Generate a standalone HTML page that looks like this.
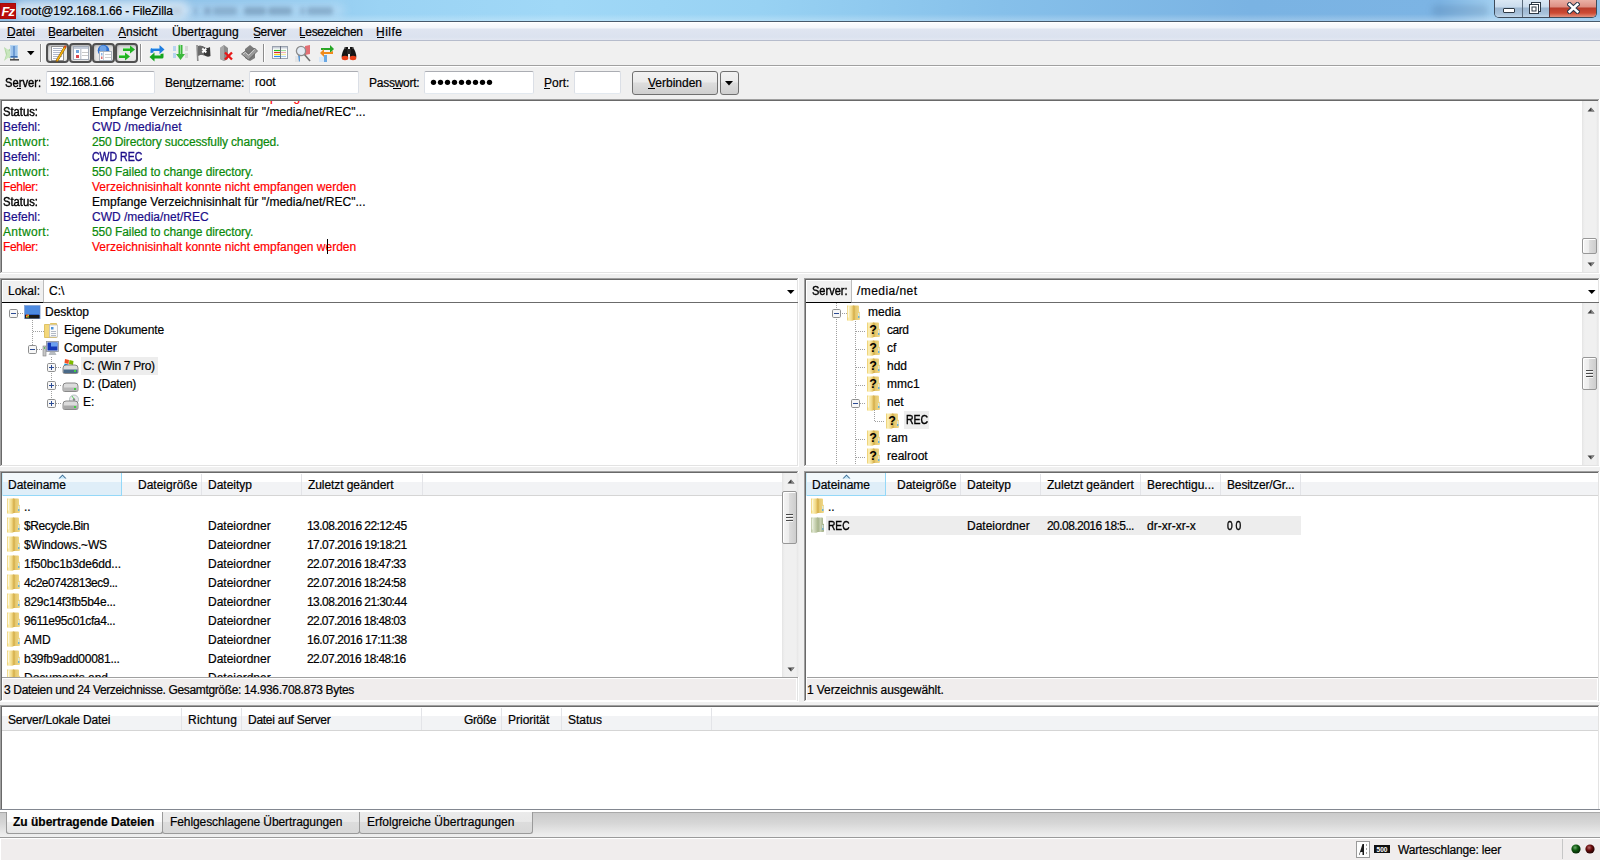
<!DOCTYPE html>
<html><head><meta charset="utf-8">
<style>
*{box-sizing:border-box;margin:0;padding:0}
html,body{width:1600px;height:860px;overflow:hidden;background:#f0f0f0;font:12px "Liberation Sans",sans-serif;color:#000}
.a{position:absolute;display:block}
.t{position:absolute;white-space:pre;line-height:15px;font-size:12px;transform-origin:0 0;-webkit-text-stroke:0.2px}
.clip{position:absolute;overflow:hidden}
</style></head><body>
<svg width="0" height="0" style="position:absolute">
<defs>
<linearGradient id="gF1" x1="0" x2="1" y1="0" y2="0"><stop offset="0" stop-color="#e9c965"/><stop offset=".25" stop-color="#fdf2bb"/><stop offset=".7" stop-color="#efd683"/><stop offset="1" stop-color="#d5ac45"/></linearGradient>
<linearGradient id="gF2" x1="0" x2="1" y1="0" y2="0"><stop offset="0" stop-color="#c49a30"/><stop offset=".35" stop-color="#e6c86e"/><stop offset="1" stop-color="#f0da8e"/></linearGradient>
<linearGradient id="gG1" x1="0" x2="1" y1="0" y2="0"><stop offset="0" stop-color="#b3c09a"/><stop offset=".3" stop-color="#dfe6cf"/><stop offset="1" stop-color="#a9b68c"/></linearGradient>
<linearGradient id="gG2" x1="0" x2="1" y1="0" y2="0"><stop offset="0" stop-color="#98a67e"/><stop offset=".5" stop-color="#c6d0b0"/><stop offset="1" stop-color="#9aa880"/></linearGradient>
<symbol id="fold" viewBox="0 0 16 16">
 <path d="M8 0.5 h5 q1 0 1 1 v5 l1 .8 v6.7 q0 1 -1 1 h-6 z" fill="url(#gF2)"/>
 <path d="M2 0.5 h6 q1 0 1 1 v12.5 q0 1.8 -1.8 1.8 h-4.2 q-1 0 -1 -1 z" fill="url(#gF1)"/>
 <path d="M3.3 1.5 v11" stroke="#fffdf0" stroke-width=".9"/>
 <rect x="13.3" y="8" width="1" height="5" fill="#d8eef8"/><rect x="13.3" y="11" width="1" height="2" fill="#3a9ad8"/>
</symbol>
<symbol id="foldg" viewBox="0 0 16 16">
 <path d="M8 0.5 h5 q1 0 1 1 v5 l1 .8 v6.7 q0 1 -1 1 h-6 z" fill="url(#gG2)"/>
 <path d="M2 0.5 h6 q1 0 1 1 v12.5 q0 1.8 -1.8 1.8 h-4.2 q-1 0 -1 -1 z" fill="url(#gG1)"/>
 <path d="M3.3 1.5 v11" stroke="#f2f6ea" stroke-width=".9"/>
 <rect x="13.3" y="8" width="1" height="5" fill="#d8eef8"/><rect x="13.3" y="11" width="1" height="2" fill="#4a9ac8"/>
</symbol>
<symbol id="qfold" viewBox="0 0 16 16">
 <path d="M8 0.5 h5 q1 0 1 1 v5 l1 .8 v6.7 q0 1 -1 1 h-6 z" fill="url(#gF2)"/>
 <path d="M2 0.5 h6 q1 0 1 1 v12.5 q0 1.8 -1.8 1.8 h-4.2 q-1 0 -1 -1 z" fill="url(#gF1)"/>
 <rect x="13.3" y="8" width="1" height="5" fill="#d8eef8"/><rect x="13.3" y="11" width="1" height="2" fill="#3a9ad8"/>
 <text x="8" y="12.3" font-family="Liberation Sans" font-weight="bold" font-size="12.5" text-anchor="middle" fill="#000">?</text>
</symbol>
<symbol id="plus" viewBox="0 0 9 9">
 <rect x=".5" y=".5" width="8" height="8" rx="1.2" fill="#f7f7f7" stroke="#8e8f8f"/>
 <path d="M2 4.5 h5 M4.5 2 v5" stroke="#2c4c94" stroke-width="1"/>
</symbol>
<symbol id="minus" viewBox="0 0 9 9">
 <rect x=".5" y=".5" width="8" height="8" rx="1.2" fill="#f7f7f7" stroke="#8e8f8f"/>
 <path d="M2 4.5 h5" stroke="#2c4c94" stroke-width="1"/>
</symbol>
</defs></svg>
<div class="a" style="left:0px;top:0px;width:1600px;height:21px;background:linear-gradient(90deg,#74a9da 0px,#88bde6 160px,#9bd3f4 380px,#a0d8f7 560px,#98d2f3 760px,#86c0ea 1000px,#7ab3e3 1250px,#7cb4e4 1440px,#9fcdef 1490px,#8fc2ea 1600px)"></div><div class="a" style="left:0px;top:14px;width:1600px;height:7px;background:linear-gradient(rgba(255,255,255,0),rgba(255,255,255,.25))"></div><div class="a" style="left:14px;top:1px;width:174px;height:19px;background:rgba(228,238,248,.85);filter:blur(4px);border-radius:8px"></div><div class="a" style="left:180px;top:3px;width:165px;height:15px;background:rgba(215,232,248,.35);filter:blur(4px);border-radius:8px"></div><div class="a" style="left:170px;top:7px;width:12px;height:8px;background:rgba(50,75,110,0.14);filter:blur(2px);border-radius:3px"></div><div class="a" style="left:194px;top:7px;width:3px;height:8px;background:rgba(50,75,110,0.22);filter:blur(2px);border-radius:3px"></div><div class="a" style="left:204px;top:7px;width:7px;height:8px;background:rgba(50,75,110,0.26);filter:blur(2px);border-radius:3px"></div><div class="a" style="left:213px;top:7px;width:24px;height:8px;background:rgba(50,75,110,0.24);filter:blur(2px);border-radius:3px"></div><div class="a" style="left:244px;top:7px;width:22px;height:8px;background:rgba(50,75,110,0.3);filter:blur(2px);border-radius:3px"></div><div class="a" style="left:268px;top:7px;width:24px;height:8px;background:rgba(50,75,110,0.3);filter:blur(2px);border-radius:3px"></div><div class="a" style="left:300px;top:7px;width:5px;height:8px;background:rgba(50,75,110,0.22);filter:blur(2px);border-radius:3px"></div><div class="a" style="left:307px;top:7px;width:26px;height:8px;background:rgba(50,75,110,0.28);filter:blur(2px);border-radius:3px"></div><div class="a" style="left:1432px;top:5px;width:56px;height:11px;background:rgba(50,75,110,.16);filter:blur(3px);border-radius:4px"></div><div class="a" style="left:0px;top:21px;width:1600px;height:1px;background:#47596b"></div><svg class="a" style="left:0px;top:3px;" width="16" height="16" viewBox="0 0 16 16"><rect x="0" y="0" width="16" height="16" fill="#b80d0d"/><rect x=".5" y=".5" width="15" height="15" fill="none" stroke="#9a0606" stroke-dasharray="1 1"/><text x="7.8" y="13" font-family="Liberation Sans" font-style="italic" font-weight="bold" font-size="13" text-anchor="middle" fill="#fff" letter-spacing="-1">Fz</text></svg><div class="t" style="left:21px;top:4px;color:#000;letter-spacing:-0.107px;">root@192.168.1.66 - FileZilla</div><div class="a" style="left:1494px;top:0;width:103px;height:18px;border:1px solid #3d4b5a;border-top:0;border-radius:0 0 5px 5px;overflow:hidden">
<div class="a" style="left:0;top:0;width:27px;height:17px;background:linear-gradient(#dbe8f4 0,#c9dbec 7px,#9cb6d0 8px,#a9c3db 14px,#c4d8ea 17px)"></div>
<div class="a" style="left:27px;top:0;width:1px;height:17px;background:#5a6b7c"></div>
<div class="a" style="left:28px;top:0;width:26px;height:17px;background:linear-gradient(#dbe8f4 0,#c9dbec 7px,#9cb6d0 8px,#a9c3db 14px,#c4d8ea 17px)"></div>
<div class="a" style="left:54px;top:0;width:1px;height:17px;background:#6a3030"></div>
<div class="a" style="left:55px;top:0;width:48px;height:17px;background:linear-gradient(#eab0a6 0,#dd8e82 7px,#b83c2c 8px,#cc4a33 13px,#e4907c 17px)"></div>
</div><div class="a" style="left:1503px;top:8px;width:12px;height:5px;background:#fff;border:1px solid #2e3a46;border-radius:1px"></div><svg class="a" style="left:1528px;top:1px;" width="14" height="14" viewBox="0 0 14 14"><rect x="3.5" y="1.5" width="9" height="9" fill="#fff" stroke="#2e3a46"/><rect x="1.5" y="3.5" width="9" height="9" fill="#fff" stroke="#2e3a46"/><rect x="4" y="6" width="4" height="4" fill="none" stroke="#2e3a46"/></svg><svg class="a" style="left:1567px;top:2px;" width="13" height="12" viewBox="0 0 13 12"><path d="M2.6 2.4 L10.4 9.6 M10.4 2.4 L2.6 9.6" stroke="#26364a" stroke-width="4.6" stroke-linecap="square"/><path d="M2.6 2.4 L10.4 9.6 M10.4 2.4 L2.6 9.6" stroke="#fff" stroke-width="2.6" stroke-linecap="square"/></svg><div class="a" style="left:0px;top:22px;width:1600px;height:19px;background:linear-gradient(#fcfdfe 0,#f3f5fa 6px,#dfe5f1 7px,#dbe2ef 15px,#e2e7f2 18px)"></div><div class="a" style="left:0px;top:40px;width:1600px;height:1px;background:#b6bccc"></div><div class="a" style="left:0px;top:22px;width:1600px;height:1px;background:#ffffff"></div><div class="t" style="left:7px;top:25px;color:#000;">Datei</div><div class="a" style="left:7px;top:37px;width:8px;height:1px;background:#000"></div><div class="t" style="left:48px;top:25px;color:#000;letter-spacing:-0.222px;">Bearbeiten</div><div class="a" style="left:49px;top:37px;width:6px;height:1px;background:#000"></div><div class="t" style="left:118px;top:25px;color:#000;">Ansicht</div><div class="a" style="left:119px;top:37px;width:7px;height:1px;background:#000"></div><div class="t" style="left:172px;top:25px;color:#000;">Übertragung</div><div class="a" style="left:201px;top:37px;width:4px;height:1px;background:#000"></div><div class="t" style="left:253px;top:25px;color:#000;letter-spacing:-0.400px;">Server</div><div class="a" style="left:254px;top:37px;width:6px;height:1px;background:#000"></div><div class="t" style="left:299px;top:25px;color:#000;letter-spacing:-0.350px;">Lesezeichen</div><div class="a" style="left:300px;top:37px;width:5px;height:1px;background:#000"></div><div class="t" style="left:376px;top:25px;color:#000;letter-spacing:0.500px;">Hilfe</div><div class="a" style="left:377px;top:37px;width:7px;height:1px;background:#000"></div><div class="a" style="left:0px;top:41px;width:1600px;height:24px;background:#f0f0f0"></div><div class="a" style="left:0px;top:65px;width:1600px;height:1px;background:#a0a0a0"></div><div class="a" style="left:0px;top:66px;width:1600px;height:1px;background:#ffffff"></div><svg class="a" style="left:3px;top:44px;" width="18" height="18" viewBox="0 0 18 18">
<path d="M1 3 L5 6 L8 4 L8 15 L5 13 L1 17 L3 11 Z" fill="#a9d39a" opacity=".9"/>
<path d="M2 4 L8 8 L8 12 L2 16 L4 10 Z" fill="#c8e6bd"/>
<rect x="7.5" y="1.5" width="7" height="12" fill="#9fc4ea" stroke="#b8d6f2"/>
<rect x="10" y="2" width="2" height="11" fill="#6b9ad4"/>
<rect x="7.5" y="12" width="7" height="1.6" fill="#3f6fae"/>
<rect x="10.5" y="13.5" width="1" height="2" fill="#444"/>
<rect x="7" y="15" width="9" height="1.6" fill="#333" opacity=".85"/>
</svg><svg class="a" style="left:27px;top:51px;" width="8" height="5" viewBox="0 0 8 5"><path d="M0 0 h7.5 l-3.75 4.2 z" fill="#000"/></svg><div class="a" style="left:40px;top:44px;width:1px;height:18px;background:#8c8c8c"></div><div class="a" style="left:41px;top:44px;width:1px;height:18px;background:#ffffff"></div><div class="a" style="left:46px;top:43px;width:23px;height:20px;border:2px solid #505050;border-radius:4px;background:linear-gradient(#d9d9d9 0,#e6e6e6 40%,#ececec 60%,#e4e4e4 100%);box-shadow:inset 1px 1px 2px rgba(0,0,0,.18)"></div><div class="a" style="left:69px;top:43px;width:23px;height:20px;border:2px solid #505050;border-radius:4px;background:linear-gradient(#d9d9d9 0,#e6e6e6 40%,#ececec 60%,#e4e4e4 100%);box-shadow:inset 1px 1px 2px rgba(0,0,0,.18)"></div><div class="a" style="left:92px;top:43px;width:23px;height:20px;border:2px solid #505050;border-radius:4px;background:linear-gradient(#d9d9d9 0,#e6e6e6 40%,#ececec 60%,#e4e4e4 100%);box-shadow:inset 1px 1px 2px rgba(0,0,0,.18)"></div><div class="a" style="left:115px;top:43px;width:23px;height:20px;border:2px solid #505050;border-radius:4px;background:linear-gradient(#d9d9d9 0,#e6e6e6 40%,#ececec 60%,#e4e4e4 100%);box-shadow:inset 1px 1px 2px rgba(0,0,0,.18)"></div><svg class="a" style="left:50px;top:45px;" width="17" height="17" viewBox="0 0 17 17">
<rect x="1.5" y="1.5" width="12" height="14" fill="#fff" stroke="#909090"/>
<path d="M3 3.5 h9 M3 5.5 h9 M3 7.5 h9 M3 9.5 h9 M3 11.5 h9 M3 13.5 h7" stroke="#a7b0c4" stroke-width=".9"/>
<path d="M15.2 1.8 L7 15.6" stroke="#8a5a10" stroke-width="2.6" stroke-linecap="round"/>
<path d="M15.2 1.8 L7 15.6" stroke="#f5b50c" stroke-width="1.6"/>
<path d="M15.6 1 L14.6 2.6" stroke="#e0401a" stroke-width="2"/>
</svg><svg class="a" style="left:72px;top:45px;" width="18" height="16" viewBox="0 0 18 16">
<rect x="1.5" y="1.5" width="15" height="13" fill="#fff" stroke="#a4acb8"/>
<rect x="2" y="2" width="14" height="2" fill="#c3cbd8"/>
<rect x="8" y="4" width="1.5" height="10" fill="#c9ced6"/>
<rect x="4" y="5" width="3" height="3" fill="#6ea3dc"/>
<rect x="4" y="10" width="3" height="3" fill="#d9434b"/>
<path d="M10 7.5 h6 M10 10.5 h6" stroke="#c8c8c8"/>
</svg><svg class="a" style="left:96px;top:44px;" width="17" height="18" viewBox="0 0 17 18">
<circle cx="7.5" cy="6.5" r="5.8" fill="#2d6fd0"/>
<circle cx="7" cy="5" r="3.5" fill="#7eb0ec" opacity=".8"/>
<rect x="3.5" y="7.5" width="12" height="9" fill="#fff" stroke="#aab2bd"/>
<rect x="7" y="8" width="1" height="8" fill="#c9ced6"/>
<rect x="5" y="9" width="1.5" height="2.5" fill="#8fb6e6"/>
<rect x="5" y="12.5" width="1.5" height="2.5" fill="#e07070"/>
<path d="M9 10.5 h6 M9 13.5 h6" stroke="#d0d0d0"/>
</svg><svg class="a" style="left:118px;top:45px;" width="18" height="17" viewBox="0 0 18 17">
<path d="M5 3 h7 v-2.5 l5 4 l-5 4 v-2.5 h-7 z" fill="#22b322"/>
<path d="M1 10 h6 v-2.5 l5 4 l-5 4 v-2.5 h-6 z" fill="#22b322"/>
<path d="M5 3 h7 v1 h-7z M1 10 h6 v1 h-6z" fill="#6de26d"/>
</svg><div class="a" style="left:140px;top:44px;width:1px;height:18px;background:#8c8c8c"></div><div class="a" style="left:141px;top:44px;width:1px;height:18px;background:#ffffff"></div><svg class="a" style="left:149px;top:44px;" width="16" height="18" viewBox="0 0 16 18">
<path d="M1.5 9 v-3.5 q0 -1.5 1.5 -1.5 h7.5 v-3 l5 4.5 l-5 4.5 v-3 h-6 v1.5 z" fill="#1f7de0"/>
<path d="M3 4.5 h7.5" stroke="#8cc4f4" stroke-width="1"/>
<path d="M14.5 9.5 v3.5 q0 1.5 -1.5 1.5 h-7.5 v3 l-5 -4.5 l5 -4.5 v3 h6 v-1.5 z" fill="#16a51e"/>
</svg><svg class="a" style="left:172px;top:44px;" width="17" height="18" viewBox="0 0 17 18">
<rect x="1" y="2" width="3" height="5" fill="#b8d4f0"/><rect x="1" y="9" width="3" height="5" fill="#b8d4f0"/>
<rect x="13" y="2" width="3" height="5" fill="#d8d8d8"/><rect x="13" y="9" width="3" height="5" fill="#d8d8d8"/>
<path d="M6.5 1 h4 v9 h2.5 l-4.5 6 l-4.5 -6 h2.5 z" fill="#3cb83c"/>
<path d="M7 1 h1.5 v9" stroke="#90e090" stroke-width="1" fill="none"/>
</svg><svg class="a" style="left:195px;top:44px;" width="17" height="18" viewBox="0 0 17 18">
<path d="M2 1 L2.8 17" stroke="#8a8a8a" stroke-width="1.6"/>
<path d="M3 2 q3 -1 6 1 t6 0 l0.5 9 q-3 1.5 -6 -0.5 t-6 0.5 z" fill="#3a3a3a"/>
<path d="M3 2 q3 -1 6 1 l0 8.5 q-3 -1.5 -6 0 z" fill="#6a6a6a"/>
<path d="M7.3 4.5 l4 4 M11.3 4.5 l-4 4" stroke="#fff" stroke-width="1.9"/>
</svg><svg class="a" style="left:219px;top:44px;" width="15" height="18" viewBox="0 0 15 18">
<path d="M1 4 l4 -3 l4 3 v11 l-4 2 l-4 -2 z" fill="#8c8c8c"/>
<path d="M1 4 l4 -3 v16 l-4 -2 z" fill="#a8a8a8"/>
<path d="M6 8.5 l7 7 M13 8.5 l-7 7" stroke="#e81818" stroke-width="2.3"/>
</svg><svg class="a" style="left:240px;top:44px;" width="18" height="18" viewBox="0 0 18 18">
<path d="M5 5 l5 -4 l5 4 v9 l-5 3 l-5 -3 z" fill="#7a7a7a"/>
<path d="M1.5 10 l4 -3 l3 3 l6 -6 l3 3 l-9 9 z" fill="#9a9a9a" stroke="#5a5a5a" stroke-width=".8"/>
<path d="M3 10.2 l2.5 -1.8 l3 3 l6 -6" stroke="#d8d8d8" stroke-width=".9" fill="none"/>
</svg><div class="a" style="left:263px;top:44px;width:1px;height:18px;background:#8c8c8c"></div><div class="a" style="left:264px;top:44px;width:1px;height:18px;background:#ffffff"></div><svg class="a" style="left:271px;top:45px;" width="18" height="15" viewBox="0 0 18 15">
<rect x="1.5" y="1.5" width="15" height="12" fill="#fff" stroke="#9aa2ae"/>
<rect x="2" y="2" width="14" height="1.5" fill="#c8ced8"/>
<path d="M3 5.5 h6" stroke="#22c022" stroke-width="1.2"/><path d="M10 5.5 h5" stroke="#9ee09e" stroke-width="1.2"/>
<path d="M3 7.5 h6" stroke="#e02a2a" stroke-width="1.2"/><path d="M10 7.5 h5" stroke="#f0b0b0" stroke-width="1.2"/>
<path d="M3 9.5 h6" stroke="#f0d81a" stroke-width="1.2"/><path d="M10 9.5 h5" stroke="#f4eca0" stroke-width="1.2"/>
<path d="M3 11.5 h6" stroke="#2a8ae8" stroke-width="1.2"/><path d="M10 11.5 h5" stroke="#a8d0f4" stroke-width="1.2"/>
<path d="M9.5 1 v13" stroke="#6a7280" stroke-width="1"/>
</svg><svg class="a" style="left:294px;top:44px;" width="18" height="18" viewBox="0 0 18 18">
<path d="M11 2 l5 -1 v9 l-5 1 z" fill="#e0585e" opacity=".85"/>
<path d="M1 12 h5 v6 h-5 z" fill="#e4e4e4"/>
<path d="M4 11 h2 v6 l-1 1 z" fill="#5c9ad8"/>
<path d="M10 10 l6 7" stroke="#707070" stroke-width="1.6"/>
<circle cx="7" cy="7" r="4.6" fill="#dbe8f6" fill-opacity=".6" stroke="#8c8c8c" stroke-width="1.3"/>
</svg><svg class="a" style="left:318px;top:44px;" width="17" height="18" viewBox="0 0 17 18">
<path d="M1 13 h6 v5 h-6 z" fill="#d8e8f8"/><path d="M6 11 h3 v7 h-3 z" fill="#6aa8e4"/>
<path d="M3 6 v-2 h9 v-3 l4 4 l-4 4 v-3 h-7 z" fill="#26a626"/>
<path d="M15 7 v3 h-9 v3 l-4 -4 l4 -4 v3 h7 z" fill="#f08a1c"/>
</svg><svg class="a" style="left:340px;top:45px;" width="18" height="16" viewBox="0 0 18 16">
<path d="M2 13 q-1 -2 1 -7 l2 -4 h3 v11 z" fill="#151515"/>
<path d="M16 13 q1 -2 -1 -7 l-2 -4 h-3 v11 z" fill="#151515"/>
<rect x="7" y="4" width="4" height="5" fill="#2a2a2a"/>
<ellipse cx="5" cy="13" rx="3.3" ry="2.2" fill="#e8401a"/>
<ellipse cx="13" cy="13" rx="3.3" ry="2.2" fill="#e8401a"/>
<path d="M4 3 h2 M12 3 h2" stroke="#707070"/>
</svg><div class="t" style="left:5px;top:76px;color:#000;transform:scaleX(0.9324);-webkit-text-stroke:0.4px;">Server:</div><div class="a" style="left:17px;top:88px;width:4px;height:1px;background:#000"></div><div class="a" style="left:46px;top:71px;width:109px;height:23px;background:#fff;border:1px solid #dbdfe6;border-top-color:#abadb3;border-bottom-color:#e3e9ef;border-radius:2px"></div><div class="t" style="left:50px;top:75px;color:#000;letter-spacing:-0.545px;">192.168.1.66</div><div class="t" style="left:165px;top:76px;color:#000;letter-spacing:-0.167px;">Benutzername:</div><div class="a" style="left:185px;top:88px;width:7px;height:1px;background:#000"></div><div class="a" style="left:249px;top:71px;width:110px;height:23px;background:#fff;border:1px solid #dbdfe6;border-top-color:#abadb3;border-bottom-color:#e3e9ef;border-radius:2px"></div><div class="t" style="left:255px;top:75px;color:#000;">root</div><div class="t" style="left:369px;top:76px;color:#000;letter-spacing:-0.250px;">Passwort:</div><div class="a" style="left:393px;top:88px;width:8px;height:1px;background:#000"></div><div class="a" style="left:424px;top:71px;width:110px;height:23px;background:#fff;border:1px solid #dbdfe6;border-top-color:#abadb3;border-bottom-color:#e3e9ef;border-radius:2px"></div><svg class="a" style="left:430px;top:79px;" width="66" height="7" viewBox="0 0 66 7"><circle cx="3.5" cy="3.3" r="2.65" fill="#000"/><circle cx="10.5" cy="3.3" r="2.65" fill="#000"/><circle cx="17.5" cy="3.3" r="2.65" fill="#000"/><circle cx="24.5" cy="3.3" r="2.65" fill="#000"/><circle cx="31.5" cy="3.3" r="2.65" fill="#000"/><circle cx="38.5" cy="3.3" r="2.65" fill="#000"/><circle cx="45.5" cy="3.3" r="2.65" fill="#000"/><circle cx="52.5" cy="3.3" r="2.65" fill="#000"/><circle cx="59.5" cy="3.3" r="2.65" fill="#000"/></svg><div class="t" style="left:544px;top:76px;color:#000;">Port:</div><div class="a" style="left:544px;top:88px;width:6px;height:1px;background:#000"></div><div class="a" style="left:574px;top:71px;width:47px;height:23px;background:#fff;border:1px solid #dbdfe6;border-top-color:#abadb3;border-bottom-color:#e3e9ef;border-radius:2px"></div><div class="a" style="left:632px;top:71px;width:86px;height:24px;border:1px solid #707070;border-radius:3px;background:linear-gradient(#f2f2f2 0,#ebebeb 45%,#dddddd 50%,#cfcfcf 100%)"></div><div class="t" style="left:648px;top:76px;color:#000;">Verbinden</div><div class="a" style="left:648px;top:88px;width:7px;height:1px;background:#000"></div><div class="a" style="left:720px;top:71px;width:19px;height:24px;border:1px solid #707070;border-radius:3px;background:linear-gradient(#f2f2f2 0,#ebebeb 45%,#dddddd 50%,#cfcfcf 100%)"></div><svg class="a" style="left:725px;top:81px;" width="9" height="5" viewBox="0 0 9 5"><path d="M0 0 h8 l-4 4.5 z" fill="#000"/></svg><div class="a" style="left:0px;top:99px;width:1600px;height:175px;background:#fff"></div><div class="a" style="left:0px;top:99px;width:1600px;height:1px;background:#a0a0a0"></div><div class="a" style="left:1px;top:100px;width:1598px;height:1px;background:#696969"></div><div class="a" style="left:0px;top:99px;width:1px;height:175px;background:#a0a0a0"></div><div class="a" style="left:1px;top:100px;width:1px;height:173px;background:#696969"></div><div class="a" style="left:0px;top:273px;width:1600px;height:1px;background:#ffffff"></div><div class="a" style="left:1px;top:272px;width:1598px;height:1px;background:#e3e3e3"></div><div class="a" style="left:1599px;top:99px;width:1px;height:175px;background:#ffffff"></div><div class="a" style="left:1598px;top:100px;width:1px;height:173px;background:#e3e3e3"></div><div class="a" style="left:1582px;top:101px;width:17px;height:171px;background:linear-gradient(90deg,#e2e2e2 0,#eaeaea 1px,#f0f0f0 3px,#f0f0f0 14px,#e6e6e6 16px,#f4f4f4 17px)"></div><svg class="a" style="left:1586.5px;top:107px;" width="8" height="5" viewBox="0 0 8 5"><path d="M0.5 4.5 L4 0.5 L7.5 4.5 z" fill="#404040"/><path d="M4 0.5 L7.5 4.5 h-3z" fill="#8a8a8a"/></svg><svg class="a" style="left:1586.5px;top:262px;" width="8" height="5" viewBox="0 0 8 5"><path d="M0.5 0.5 L4 4.5 L7.5 0.5 z" fill="#404040"/><path d="M4 4.5 L7.5 0.5 h-3z" fill="#8a8a8a"/></svg><div class="a" style="left:1582px;top:238px;width:15px;height:16px;border:1px solid #979797;border-radius:2px;background:linear-gradient(90deg,#f5f5f5 0,#ececec 45%,#dcdcdc 50%,#cdcdcd 100%);box-shadow:inset 1px 1px 0 #fff"></div><div class="clip" style="left:2px;top:101px;width:1580px;height:171px"><div class="t" style="left:1px;top:-11px;color:#ff0000;letter-spacing:-0.333px;">Fehler:</div><div class="t" style="left:90px;top:-11px;color:#ff0000;">Verzeichnisinhalt konnte nicht empfangen werden</div><div class="t" style="left:1px;top:4px;color:#000000;transform:scaleX(0.9361);-webkit-text-stroke:0.4px;">Status:</div><div class="t" style="left:90px;top:4px;color:#000000;letter-spacing:0.031px;">Empfange Verzeichnisinhalt für "/media/net/REC"...</div><div class="t" style="left:1px;top:19px;color:#1c0e8a;">Befehl:</div><div class="t" style="left:90px;top:19px;color:#1c0e8a;letter-spacing:0.115px;">CWD /media/net</div><div class="t" style="left:1px;top:34px;color:#0b8a0b;letter-spacing:0.329px;">Antwort:</div><div class="t" style="left:90px;top:34px;color:#0b8a0b;letter-spacing:-0.138px;">250 Directory successfully changed.</div><div class="t" style="left:1px;top:49px;color:#1c0e8a;">Befehl:</div><div class="t" style="left:90px;top:49px;color:#1c0e8a;transform:scaleX(0.8772);-webkit-text-stroke:0.4px;">CWD REC</div><div class="t" style="left:1px;top:64px;color:#0b8a0b;letter-spacing:0.329px;">Antwort:</div><div class="t" style="left:90px;top:64px;color:#0b8a0b;letter-spacing:-0.083px;">550 Failed to change directory.</div><div class="t" style="left:1px;top:79px;color:#ff0000;letter-spacing:-0.333px;">Fehler:</div><div class="t" style="left:90px;top:79px;color:#ff0000;">Verzeichnisinhalt konnte nicht empfangen werden</div><div class="t" style="left:1px;top:94px;color:#000000;transform:scaleX(0.9361);-webkit-text-stroke:0.4px;">Status:</div><div class="t" style="left:90px;top:94px;color:#000000;letter-spacing:0.031px;">Empfange Verzeichnisinhalt für "/media/net/REC"...</div><div class="t" style="left:1px;top:109px;color:#1c0e8a;">Befehl:</div><div class="t" style="left:90px;top:109px;color:#1c0e8a;">CWD /media/net/REC</div><div class="t" style="left:1px;top:124px;color:#0b8a0b;letter-spacing:0.329px;">Antwort:</div><div class="t" style="left:90px;top:124px;color:#0b8a0b;letter-spacing:-0.083px;">550 Failed to change directory.</div><div class="t" style="left:1px;top:139px;color:#ff0000;letter-spacing:-0.333px;">Fehler:</div><div class="t" style="left:90px;top:139px;color:#ff0000;">Verzeichnisinhalt konnte nicht empfangen werden</div></div><div class="a" style="left:327px;top:239px;width:1px;height:15px;background:#000"></div><div class="a" style="left:0px;top:278px;width:799px;height:189px;background:#fff"></div><div class="a" style="left:0px;top:278px;width:799px;height:1px;background:#a0a0a0"></div><div class="a" style="left:1px;top:279px;width:797px;height:1px;background:#696969"></div><div class="a" style="left:0px;top:278px;width:1px;height:189px;background:#a0a0a0"></div><div class="a" style="left:1px;top:279px;width:1px;height:187px;background:#696969"></div><div class="a" style="left:0px;top:466px;width:799px;height:1px;background:#ffffff"></div><div class="a" style="left:1px;top:465px;width:797px;height:1px;background:#e3e3e3"></div><div class="a" style="left:798px;top:278px;width:1px;height:189px;background:#ffffff"></div><div class="a" style="left:797px;top:279px;width:1px;height:187px;background:#e3e3e3"></div><div class="a" style="left:2px;top:280px;width:41px;height:22px;background:#f0f0f0;border-top:1px solid #fff;border-left:1px solid #fff"></div><div class="a" style="left:43px;top:280px;width:1px;height:22px;background:#bdbdbd"></div><div class="a" style="left:2px;top:302px;width:41px;height:1px;background:#000000"></div><div class="a" style="left:43px;top:302px;width:755px;height:1px;background:#6b6b6b"></div><div class="t" style="left:8px;top:284px;color:#000;">Lokal:</div><div class="t" style="left:49px;top:284px;color:#000;">C:\</div><svg class="a" style="left:787px;top:290px;" width="8" height="4" viewBox="0 0 8 4"><path d="M0 0 h7.5 l-3.75 4 z" fill="#000"/></svg><div class="a" style="left:804px;top:278px;width:796px;height:189px;background:#fff"></div><div class="a" style="left:804px;top:278px;width:796px;height:1px;background:#a0a0a0"></div><div class="a" style="left:805px;top:279px;width:794px;height:1px;background:#696969"></div><div class="a" style="left:804px;top:278px;width:1px;height:189px;background:#a0a0a0"></div><div class="a" style="left:805px;top:279px;width:1px;height:187px;background:#696969"></div><div class="a" style="left:804px;top:466px;width:796px;height:1px;background:#ffffff"></div><div class="a" style="left:805px;top:465px;width:794px;height:1px;background:#e3e3e3"></div><div class="a" style="left:1599px;top:278px;width:1px;height:189px;background:#ffffff"></div><div class="a" style="left:1598px;top:279px;width:1px;height:187px;background:#e3e3e3"></div><div class="a" style="left:806px;top:280px;width:45px;height:22px;background:#f0f0f0;border-top:1px solid #fff;border-left:1px solid #fff"></div><div class="a" style="left:851px;top:280px;width:1px;height:22px;background:#bdbdbd"></div><div class="a" style="left:806px;top:302px;width:45px;height:1px;background:#000000"></div><div class="a" style="left:851px;top:302px;width:748px;height:1px;background:#6b6b6b"></div><div class="t" style="left:812px;top:284px;color:#000;transform:scaleX(0.9189);-webkit-text-stroke:0.4px;">Server:</div><div class="t" style="left:857px;top:284px;color:#000;letter-spacing:0.444px;">/media/net</div><svg class="a" style="left:1588px;top:290px;" width="8" height="4" viewBox="0 0 8 4"><path d="M0 0 h7.5 l-3.75 4 z" fill="#000"/></svg><div class="a" style="left:32px;top:320px;width:1px;height:29px;background:repeating-linear-gradient(180deg,#a0a0a0 0,#a0a0a0 1px,transparent 1px,transparent 2px)"></div><div class="a" style="left:18px;top:313px;width:6px;height:1px;background:repeating-linear-gradient(90deg,#a0a0a0 0,#a0a0a0 1px,transparent 1px,transparent 2px)"></div><div class="a" style="left:33px;top:331px;width:11px;height:1px;background:repeating-linear-gradient(90deg,#a0a0a0 0,#a0a0a0 1px,transparent 1px,transparent 2px)"></div><div class="a" style="left:37px;top:349px;width:6px;height:1px;background:repeating-linear-gradient(90deg,#a0a0a0 0,#a0a0a0 1px,transparent 1px,transparent 2px)"></div><div class="a" style="left:51px;top:357px;width:1px;height:46px;background:repeating-linear-gradient(180deg,#a0a0a0 0,#a0a0a0 1px,transparent 1px,transparent 2px)"></div><div class="a" style="left:56px;top:367px;width:6px;height:1px;background:repeating-linear-gradient(90deg,#a0a0a0 0,#a0a0a0 1px,transparent 1px,transparent 2px)"></div><div class="a" style="left:56px;top:385px;width:6px;height:1px;background:repeating-linear-gradient(90deg,#a0a0a0 0,#a0a0a0 1px,transparent 1px,transparent 2px)"></div><div class="a" style="left:56px;top:403px;width:6px;height:1px;background:repeating-linear-gradient(90deg,#a0a0a0 0,#a0a0a0 1px,transparent 1px,transparent 2px)"></div><svg class="a" style="left:9px;top:309px" width="9" height="9"><use href="#minus"/></svg><svg class="a" style="left:28px;top:345px" width="9" height="9"><use href="#minus"/></svg><svg class="a" style="left:47px;top:363px" width="9" height="9"><use href="#plus"/></svg><svg class="a" style="left:47px;top:381px" width="9" height="9"><use href="#plus"/></svg><svg class="a" style="left:47px;top:399px" width="9" height="9"><use href="#plus"/></svg><svg class="a" style="left:24px;top:305px;" width="17" height="15" viewBox="0 0 17 15"><rect x=".5" y=".5" width="15.5" height="13" fill="#2f63c4" stroke="#8aa8d8"/><rect x="1" y="1" width="14.5" height="8" fill="#4d8ae0"/><rect x="1" y="10" width="14.5" height="3.5" fill="#1a1a1a"/><rect x="2" y="9.5" width="3" height="3" fill="#f0a020"/><rect x="2.2" y="9.7" width="1.3" height="1.3" fill="#e03020"/><rect x="3.5" y="11" width="1.3" height="1.3" fill="#30a030"/></svg><svg class="a" style="left:43px;top:322px;" width="16" height="17" viewBox="0 0 16 17"><path d="M1.5 2.5 h5 l1 -1 h6 v14 h-12 z" fill="#f3d77a" stroke="#d8b850" stroke-width=".8"/><rect x="6.5" y="3" width="8" height="12" fill="#fafafa" stroke="#b8b8b8" stroke-width=".7"/><rect x="8" y="5" width="2.5" height="2.5" fill="#4a90d8"/><path d="M8 9.5 h5 M8 11.5 h5 M8 13.5 h5" stroke="#a0a8b8" stroke-width=".8"/></svg><svg class="a" style="left:42px;top:340px;" width="18" height="18" viewBox="0 0 18 18"><rect x="1" y="6" width="3" height="10" fill="#c8c8c8" stroke="#808080" stroke-width=".6"/><rect x="2" y="7" width="1" height="2" fill="#60c060"/><rect x="4.5" y="1.5" width="12" height="10" fill="#d8dde4" stroke="#8a9098" stroke-width=".8"/><rect x="5.5" y="2.5" width="10" height="8" fill="#1438b8"/><rect x="9" y="2.5" width="6.5" height="4" fill="#6aa0f0"/><path d="M8 12 h5 l1.5 3 h-8 z" fill="#b8bcc0"/></svg><svg class="a" style="left:62px;top:358px;" width="17" height="17" viewBox="0 0 17 17"><path d="M3 1 l4 1 l-0.5 4 l-4 -1 z" fill="#f25022"/><path d="M7.5 2 l4 1 l-0.5 4 l-4 -1 z" fill="#7fba00"/><path d="M2.5 5.5 l4 1 l-0.5 3 l-4 -1z" fill="#00a4ef"/><path d="M7 6.5 l4 1 l-0.5 3 l-4 -1 z" fill="#ffb900"/><path d="M1 10 q0 -3 3 -3 h9 q3 0 3 3 v4 q0 1.5 -1.5 1.5 h-12 q-1.5 0 -1.5 -1.5 z" fill="#dcdcdc" stroke="#707070" stroke-width=".8"/><rect x="1.5" y="11.5" width="14" height="3.5" fill="#4a6a88"/><rect x="12" y="12" width="2" height="2" fill="#40d040"/></svg><svg class="a" style="left:62px;top:376px;" width="17" height="17" viewBox="0 0 17 17"><path d="M1 10 q0 -3 3 -3 h9 q3 0 3 3 v4 q0 1.5 -1.5 1.5 h-12 q-1.5 0 -1.5 -1.5 z" fill="#dcdcdc" stroke="#707070" stroke-width=".8"/><rect x="1.5" y="11.5" width="14" height="3.5" fill="#b8b8b8"/><rect x="12" y="12" width="2" height="2" fill="#40d040"/></svg><svg class="a" style="left:62px;top:394px;" width="17" height="17" viewBox="0 0 17 17"><circle cx="12" cy="5.5" r="4.5" fill="#e8e8ec" stroke="#9aa" stroke-width=".7"/><circle cx="12" cy="5.5" r="1.2" fill="#888"/><path d="M10 2 l2 3" stroke="#60d060"/><path d="M1 10 q0 -3 3 -3 h9 q3 0 3 3 v4 q0 1.5 -1.5 1.5 h-12 q-1.5 0 -1.5 -1.5 z" fill="#dcdcdc" stroke="#707070" stroke-width=".8"/><rect x="1.5" y="11.5" width="14" height="3.5" fill="#a8a8a8"/><rect x="12" y="12" width="2" height="2" fill="#40d040"/></svg><div class="a" style="left:81px;top:357px;width:77px;height:18px;background:#ededed"></div><div class="t" style="left:45px;top:305px;color:#000;">Desktop</div><div class="t" style="left:64px;top:323px;color:#000;letter-spacing:-0.133px;">Eigene Dokumente</div><div class="t" style="left:64px;top:341px;color:#000;">Computer</div><div class="t" style="left:83px;top:359px;color:#000;letter-spacing:-0.308px;">C: (Win 7 Pro)</div><div class="t" style="left:83px;top:377px;color:#000;letter-spacing:-0.222px;">D: (Daten)</div><div class="t" style="left:83px;top:395px;color:#000;">E:</div><div class="a" style="left:1582px;top:303px;width:17px;height:162px;background:linear-gradient(90deg,#e2e2e2 0,#eaeaea 1px,#f0f0f0 3px,#f0f0f0 14px,#e6e6e6 16px,#f4f4f4 17px)"></div><svg class="a" style="left:1586.5px;top:309px;" width="8" height="5" viewBox="0 0 8 5"><path d="M0.5 4.5 L4 0.5 L7.5 4.5 z" fill="#404040"/><path d="M4 0.5 L7.5 4.5 h-3z" fill="#8a8a8a"/></svg><svg class="a" style="left:1586.5px;top:455px;" width="8" height="5" viewBox="0 0 8 5"><path d="M0.5 0.5 L4 4.5 L7.5 0.5 z" fill="#404040"/><path d="M4 4.5 L7.5 0.5 h-3z" fill="#8a8a8a"/></svg><div class="a" style="left:1582px;top:357px;width:15px;height:33px;border:1px solid #979797;border-radius:2px;background:linear-gradient(90deg,#f5f5f5 0,#ececec 45%,#dcdcdc 50%,#cdcdcd 100%);box-shadow:inset 1px 1px 0 #fff"></div><div class="a" style="left:1586px;top:370px;width:7px;height:1px;background:#4a4a4a"></div><div class="a" style="left:1586px;top:371px;width:7px;height:1px;background:#f8f8f8"></div><div class="a" style="left:1586px;top:373px;width:7px;height:1px;background:#4a4a4a"></div><div class="a" style="left:1586px;top:374px;width:7px;height:1px;background:#f8f8f8"></div><div class="a" style="left:1586px;top:376px;width:7px;height:1px;background:#4a4a4a"></div><div class="a" style="left:1586px;top:377px;width:7px;height:1px;background:#f8f8f8"></div><div class="clip" style="left:807px;top:303px;width:775px;height:162px"><div class="a" style="left:29px;top:0px;width:1px;height:162px;background:repeating-linear-gradient(180deg,#a0a0a0 0,#a0a0a0 1px,transparent 1px,transparent 2px)"></div><div class="a" style="left:48px;top:16px;width:1px;height:146px;background:repeating-linear-gradient(180deg,#a0a0a0 0,#a0a0a0 1px,transparent 1px,transparent 2px)"></div><div class="a" style="left:67px;top:105px;width:1px;height:14px;background:repeating-linear-gradient(180deg,#a0a0a0 0,#a0a0a0 1px,transparent 1px,transparent 2px)"></div><div class="a" style="left:35px;top:10px;width:5px;height:1px;background:repeating-linear-gradient(90deg,#a0a0a0 0,#a0a0a0 1px,transparent 1px,transparent 2px)"></div><div class="a" style="left:49px;top:28px;width:10px;height:1px;background:repeating-linear-gradient(90deg,#a0a0a0 0,#a0a0a0 1px,transparent 1px,transparent 2px)"></div><div class="a" style="left:49px;top:46px;width:10px;height:1px;background:repeating-linear-gradient(90deg,#a0a0a0 0,#a0a0a0 1px,transparent 1px,transparent 2px)"></div><div class="a" style="left:49px;top:64px;width:10px;height:1px;background:repeating-linear-gradient(90deg,#a0a0a0 0,#a0a0a0 1px,transparent 1px,transparent 2px)"></div><div class="a" style="left:49px;top:82px;width:10px;height:1px;background:repeating-linear-gradient(90deg,#a0a0a0 0,#a0a0a0 1px,transparent 1px,transparent 2px)"></div><div class="a" style="left:49px;top:136px;width:10px;height:1px;background:repeating-linear-gradient(90deg,#a0a0a0 0,#a0a0a0 1px,transparent 1px,transparent 2px)"></div><div class="a" style="left:49px;top:154px;width:10px;height:1px;background:repeating-linear-gradient(90deg,#a0a0a0 0,#a0a0a0 1px,transparent 1px,transparent 2px)"></div><div class="a" style="left:53px;top:100px;width:6px;height:1px;background:repeating-linear-gradient(90deg,#a0a0a0 0,#a0a0a0 1px,transparent 1px,transparent 2px)"></div><div class="a" style="left:68px;top:118px;width:10px;height:1px;background:repeating-linear-gradient(90deg,#a0a0a0 0,#a0a0a0 1px,transparent 1px,transparent 2px)"></div><svg class="a" style="left:25px;top:6px" width="9" height="9"><use href="#minus"/></svg><svg class="a" style="left:44px;top:96px" width="9" height="9"><use href="#minus"/></svg><svg class="a" style="left:38px;top:2px" width="16" height="16"><use href="#fold"/></svg><svg class="a" style="left:58px;top:19px" width="16" height="16"><use href="#qfold"/></svg><svg class="a" style="left:58px;top:37px" width="16" height="16"><use href="#qfold"/></svg><svg class="a" style="left:58px;top:55px" width="16" height="16"><use href="#qfold"/></svg><svg class="a" style="left:58px;top:73px" width="16" height="16"><use href="#qfold"/></svg><svg class="a" style="left:58px;top:127px" width="16" height="16"><use href="#qfold"/></svg><svg class="a" style="left:58px;top:145px" width="16" height="16"><use href="#qfold"/></svg><svg class="a" style="left:58px;top:92px" width="16" height="16"><use href="#fold"/></svg><svg class="a" style="left:77px;top:110px" width="16" height="16"><use href="#qfold"/></svg><div class="a" style="left:97px;top:108px;width:25px;height:18px;background:#ededed"></div><div class="t" style="left:61px;top:2px;color:#000;">media</div><div class="t" style="left:80px;top:20px;color:#000;letter-spacing:-0.433px;">card</div><div class="t" style="left:80px;top:38px;color:#000;">cf</div><div class="t" style="left:80px;top:56px;color:#000;">hdd</div><div class="t" style="left:80px;top:74px;color:#000;">mmc1</div><div class="t" style="left:80px;top:92px;color:#000;">net</div><div class="t" style="left:99px;top:110px;color:#000;transform:scaleX(0.8750);-webkit-text-stroke:0.4px;">REC</div><div class="t" style="left:80px;top:128px;color:#000;">ram</div><div class="t" style="left:80px;top:146px;color:#000;">realroot</div></div><div class="a" style="left:0px;top:471px;width:799px;height:231px;background:#fff"></div><div class="a" style="left:0px;top:471px;width:799px;height:1px;background:#a0a0a0"></div><div class="a" style="left:1px;top:472px;width:797px;height:1px;background:#696969"></div><div class="a" style="left:0px;top:471px;width:1px;height:231px;background:#a0a0a0"></div><div class="a" style="left:1px;top:472px;width:1px;height:229px;background:#696969"></div><div class="a" style="left:0px;top:701px;width:799px;height:1px;background:#ffffff"></div><div class="a" style="left:1px;top:700px;width:797px;height:1px;background:#e3e3e3"></div><div class="a" style="left:798px;top:471px;width:1px;height:231px;background:#ffffff"></div><div class="a" style="left:797px;top:472px;width:1px;height:229px;background:#e3e3e3"></div><div class="a" style="left:2px;top:473px;width:780px;height:22px;background:linear-gradient(#ffffff 0,#ffffff 9px,#f2f3f5 9px,#f2f3f5 100%)"></div><div class="a" style="left:2px;top:495px;width:780px;height:1px;background:#d5d5d5"></div><div class="a" style="left:2px;top:473px;width:120px;height:23px;background:linear-gradient(#f3f9fc 0,#f3f9fc 9px,#dfeef8 9px,#dfeef8 100%);border-right:1px solid #94d8f8;border-bottom:1px solid #94d8f8"></div><div class="a" style="left:2px;top:473px;width:1px;height:23px;background:#c8ecfb"></div><svg class="a" style="left:58px;top:474px;" width="9" height="5" viewBox="0 0 9 5"><path d="M0.5 4.5 L4.5 0.5 L8.5 4.5 h-1.5 L4.5 2 L2 4.5 z" fill="#3c6e96"/><path d="M2 4.5 L4.5 2 L7 4.5z" fill="#bfe6fa"/></svg><div class="a" style="left:201px;top:474px;width:1px;height:21px;background:#e3e4e8"></div><div class="a" style="left:301px;top:474px;width:1px;height:21px;background:#e3e4e8"></div><div class="a" style="left:422px;top:474px;width:1px;height:21px;background:#e3e4e8"></div><div class="t" style="left:8px;top:478px;color:#000;">Dateiname</div><div class="t" style="left:138px;top:478px;color:#000;">Dateigröße</div><div class="t" style="left:208px;top:478px;color:#000;">Dateityp</div><div class="t" style="left:308px;top:478px;color:#000;letter-spacing:-0.080px;">Zuletzt geändert</div><div class="a" style="left:782px;top:473px;width:17px;height:204px;background:linear-gradient(90deg,#e2e2e2 0,#eaeaea 1px,#f0f0f0 3px,#f0f0f0 14px,#e6e6e6 16px,#f4f4f4 17px)"></div><svg class="a" style="left:786.5px;top:479px;" width="8" height="5" viewBox="0 0 8 5"><path d="M0.5 4.5 L4 0.5 L7.5 4.5 z" fill="#404040"/><path d="M4 0.5 L7.5 4.5 h-3z" fill="#8a8a8a"/></svg><svg class="a" style="left:786.5px;top:667px;" width="8" height="5" viewBox="0 0 8 5"><path d="M0.5 0.5 L4 4.5 L7.5 0.5 z" fill="#404040"/><path d="M4 4.5 L7.5 0.5 h-3z" fill="#8a8a8a"/></svg><div class="a" style="left:782px;top:491px;width:15px;height:53px;border:1px solid #979797;border-radius:2px;background:linear-gradient(90deg,#f5f5f5 0,#ececec 45%,#dcdcdc 50%,#cdcdcd 100%);box-shadow:inset 1px 1px 0 #fff"></div><div class="a" style="left:786px;top:514px;width:7px;height:1px;background:#4a4a4a"></div><div class="a" style="left:786px;top:515px;width:7px;height:1px;background:#f8f8f8"></div><div class="a" style="left:786px;top:517px;width:7px;height:1px;background:#4a4a4a"></div><div class="a" style="left:786px;top:518px;width:7px;height:1px;background:#f8f8f8"></div><div class="a" style="left:786px;top:520px;width:7px;height:1px;background:#4a4a4a"></div><div class="a" style="left:786px;top:521px;width:7px;height:1px;background:#f8f8f8"></div><div class="clip" style="left:2px;top:496px;width:781px;height:181px"><svg class="a" style="left:3px;top:2px" width="16" height="16"><use href="#fold"/></svg><div class="t" style="left:22px;top:4px;color:#000;">..</div><svg class="a" style="left:3px;top:21px" width="16" height="16"><use href="#fold"/></svg><div class="t" style="left:22px;top:23px;color:#000;letter-spacing:-0.409px;">$Recycle.Bin</div><div class="t" style="left:206px;top:23px;color:#000;">Dateiordner</div><div class="t" style="left:305px;top:23px;color:#000;letter-spacing:-0.556px;">13.08.2016 22:12:45</div><svg class="a" style="left:3px;top:40px" width="16" height="16"><use href="#fold"/></svg><div class="t" style="left:22px;top:42px;color:#000;letter-spacing:-0.182px;">$Windows.~WS</div><div class="t" style="left:206px;top:42px;color:#000;">Dateiordner</div><div class="t" style="left:305px;top:42px;color:#000;letter-spacing:-0.556px;">17.07.2016 19:18:21</div><svg class="a" style="left:3px;top:59px" width="16" height="16"><use href="#fold"/></svg><div class="t" style="left:22px;top:61px;color:#000;letter-spacing:-0.150px;">1f50bc1b3de6dd...</div><div class="t" style="left:206px;top:61px;color:#000;">Dateiordner</div><div class="t" style="left:305px;top:61px;color:#000;letter-spacing:-0.611px;">22.07.2016 18:47:33</div><svg class="a" style="left:3px;top:78px" width="16" height="16"><use href="#fold"/></svg><div class="t" style="left:22px;top:80px;color:#000;letter-spacing:-0.513px;">4c2e0742813ec9...</div><div class="t" style="left:206px;top:80px;color:#000;">Dateiordner</div><div class="t" style="left:305px;top:80px;color:#000;letter-spacing:-0.611px;">22.07.2016 18:24:58</div><svg class="a" style="left:3px;top:97px" width="16" height="16"><use href="#fold"/></svg><div class="t" style="left:22px;top:99px;color:#000;letter-spacing:-0.263px;">829c14f3fb5b4e...</div><div class="t" style="left:206px;top:99px;color:#000;">Dateiordner</div><div class="t" style="left:305px;top:99px;color:#000;letter-spacing:-0.556px;">13.08.2016 21:30:44</div><svg class="a" style="left:3px;top:116px" width="16" height="16"><use href="#fold"/></svg><div class="t" style="left:22px;top:118px;color:#000;letter-spacing:-0.388px;">9611e95c01cfa4...</div><div class="t" style="left:206px;top:118px;color:#000;">Dateiordner</div><div class="t" style="left:305px;top:118px;color:#000;letter-spacing:-0.611px;">22.07.2016 18:48:03</div><svg class="a" style="left:3px;top:135px" width="16" height="16"><use href="#fold"/></svg><div class="t" style="left:22px;top:137px;color:#000;">AMD</div><div class="t" style="left:206px;top:137px;color:#000;">Dateiordner</div><div class="t" style="left:305px;top:137px;color:#000;letter-spacing:-0.500px;">16.07.2016 17:11:38</div><svg class="a" style="left:3px;top:154px" width="16" height="16"><use href="#fold"/></svg><div class="t" style="left:22px;top:156px;color:#000;letter-spacing:-0.263px;">b39fb9add00081...</div><div class="t" style="left:206px;top:156px;color:#000;">Dateiordner</div><div class="t" style="left:305px;top:156px;color:#000;letter-spacing:-0.611px;">22.07.2016 18:48:16</div><svg class="a" style="left:3px;top:173px" width="16" height="16"><use href="#fold"/></svg><div class="t" style="left:22px;top:175px;color:#000;">Documents and ...</div><div class="t" style="left:206px;top:175px;color:#000;">Dateiordner</div></div><div class="a" style="left:2px;top:677px;width:781px;height:1px;background:#a0a0a0"></div><div class="a" style="left:2px;top:678px;width:795px;height:23px;background:#f0eded;border:1px solid #fff"></div><div class="a" style="left:2px;top:677px;width:796px;height:1px;background:#a0a0a0"></div><div class="t" style="left:4px;top:683px;color:#000;letter-spacing:-0.344px;">3 Dateien und 24 Verzeichnisse. Gesamtgröße: 14.936.708.873 Bytes</div><div class="a" style="left:804px;top:471px;width:796px;height:231px;background:#fff"></div><div class="a" style="left:804px;top:471px;width:796px;height:1px;background:#a0a0a0"></div><div class="a" style="left:805px;top:472px;width:794px;height:1px;background:#696969"></div><div class="a" style="left:804px;top:471px;width:1px;height:231px;background:#a0a0a0"></div><div class="a" style="left:805px;top:472px;width:1px;height:229px;background:#696969"></div><div class="a" style="left:804px;top:701px;width:796px;height:1px;background:#ffffff"></div><div class="a" style="left:805px;top:700px;width:794px;height:1px;background:#e3e3e3"></div><div class="a" style="left:1599px;top:471px;width:1px;height:231px;background:#ffffff"></div><div class="a" style="left:1598px;top:472px;width:1px;height:229px;background:#e3e3e3"></div><div class="a" style="left:806px;top:473px;width:792px;height:22px;background:linear-gradient(#ffffff 0,#ffffff 9px,#f2f3f5 9px,#f2f3f5 100%)"></div><div class="a" style="left:806px;top:495px;width:792px;height:1px;background:#d5d5d5"></div><div class="a" style="left:806px;top:473px;width:80px;height:23px;background:linear-gradient(#f3f9fc 0,#f3f9fc 9px,#dfeef8 9px,#dfeef8 100%);border-right:1px solid #94d8f8;border-bottom:1px solid #94d8f8"></div><div class="a" style="left:806px;top:473px;width:1px;height:23px;background:#c8ecfb"></div><svg class="a" style="left:842px;top:474px;" width="9" height="5" viewBox="0 0 9 5"><path d="M0.5 4.5 L4.5 0.5 L8.5 4.5 h-1.5 L4.5 2 L2 4.5 z" fill="#3c6e96"/><path d="M2 4.5 L4.5 2 L7 4.5z" fill="#bfe6fa"/></svg><div class="a" style="left:960px;top:474px;width:1px;height:21px;background:#e3e4e8"></div><div class="a" style="left:1040px;top:474px;width:1px;height:21px;background:#e3e4e8"></div><div class="a" style="left:1140px;top:474px;width:1px;height:21px;background:#e3e4e8"></div><div class="a" style="left:1220px;top:474px;width:1px;height:21px;background:#e3e4e8"></div><div class="a" style="left:1300px;top:474px;width:1px;height:21px;background:#e3e4e8"></div><div class="t" style="left:812px;top:478px;color:#000;">Dateiname</div><div class="t" style="left:897px;top:478px;color:#000;">Dateigröße</div><div class="t" style="left:967px;top:478px;color:#000;">Dateityp</div><div class="t" style="left:1047px;top:478px;color:#000;">Zuletzt geändert</div><div class="t" style="left:1147px;top:478px;color:#000;">Berechtigu...</div><div class="t" style="left:1227px;top:478px;color:#000;letter-spacing:-0.131px;">Besitzer/Gr...</div><svg class="a" style="left:809px;top:498px" width="16" height="16"><use href="#fold"/></svg><div class="t" style="left:828px;top:500px;color:#000;">..</div><div class="a" style="left:826px;top:516px;width:475px;height:19px;background:#ededed"></div><svg class="a" style="left:809px;top:517px" width="16" height="16"><use href="#foldg"/></svg><div class="t" style="left:828px;top:519px;color:#000;transform:scaleX(0.8500);-webkit-text-stroke:0.4px;">REC</div><div class="t" style="left:967px;top:519px;color:#000;">Dateiordner</div><div class="t" style="left:1047px;top:519px;color:#000;letter-spacing:-0.553px;">20.08.2016 18:5...</div><div class="t" style="left:1147px;top:519px;color:#000;">dr-xr-xr-x</div><div class="t" style="left:1227px;top:519px;color:#000;transform:scaleX(0.8588);-webkit-text-stroke:0.4px;">0 0</div><div class="a" style="left:806px;top:678px;width:792px;height:23px;background:#f0eded;border:1px solid #fff"></div><div class="a" style="left:807px;top:677px;width:791px;height:1px;background:#a0a0a0"></div><div class="t" style="left:807px;top:683px;color:#000;letter-spacing:-0.083px;">1 Verzeichnis ausgewählt.</div><div class="a" style="left:0px;top:705px;width:1600px;height:106px;background:#fff"></div><div class="a" style="left:0px;top:705px;width:1600px;height:1px;background:#a0a0a0"></div><div class="a" style="left:1px;top:706px;width:1598px;height:1px;background:#696969"></div><div class="a" style="left:0px;top:705px;width:1px;height:106px;background:#a0a0a0"></div><div class="a" style="left:1px;top:706px;width:1px;height:104px;background:#696969"></div><div class="a" style="left:0px;top:810px;width:1600px;height:1px;background:#ffffff"></div><div class="a" style="left:1px;top:809px;width:1598px;height:1px;background:#e3e3e3"></div><div class="a" style="left:1599px;top:705px;width:1px;height:106px;background:#ffffff"></div><div class="a" style="left:1598px;top:706px;width:1px;height:104px;background:#e3e3e3"></div><div class="a" style="left:0px;top:809px;width:1600px;height:1px;background:#828790"></div><div class="a" style="left:2px;top:707px;width:1596px;height:23px;background:linear-gradient(#ffffff 0,#ffffff 9px,#f2f3f5 9px,#f2f3f5 100%)"></div><div class="a" style="left:2px;top:730px;width:1596px;height:1px;background:#d5d5d5"></div><div class="a" style="left:181px;top:708px;width:1px;height:22px;background:#e3e4e8"></div><div class="a" style="left:241px;top:708px;width:1px;height:22px;background:#e3e4e8"></div><div class="a" style="left:421px;top:708px;width:1px;height:22px;background:#e3e4e8"></div><div class="a" style="left:501px;top:708px;width:1px;height:22px;background:#e3e4e8"></div><div class="a" style="left:561px;top:708px;width:1px;height:22px;background:#e3e4e8"></div><div class="a" style="left:711px;top:708px;width:1px;height:22px;background:#e3e4e8"></div><div class="t" style="left:8px;top:713px;color:#000;letter-spacing:-0.167px;">Server/Lokale Datei</div><div class="t" style="left:188px;top:713px;color:#000;letter-spacing:0.214px;">Richtung</div><div class="t" style="left:248px;top:713px;color:#000;letter-spacing:-0.267px;">Datei auf Server</div><div class="t" style="left:464px;top:713px;color:#000;letter-spacing:-0.375px;">Größe</div><div class="t" style="left:508px;top:713px;color:#000;">Priorität</div><div class="t" style="left:568px;top:713px;color:#000;">Status</div><div class="a" style="left:0px;top:811px;width:1600px;height:26px;background:linear-gradient(#ffffff 0,#ffffff 1px,#a9a9a9 1px,#a9a9a9 2px,#cbcbcb 2px,#d6d6d6 12px,#e9e9e9 22px,#efefef 26px)"></div><div class="a" style="left:0px;top:837px;width:1600px;height:1px;background:#9a9a9a"></div><div class="a" style="left:6px;top:812px;width:157px;height:22px;background:linear-gradient(#ffffff 0,#fbfbfb 45%,#f0f0f0 50%,#e6e6e6 100%);border:1px solid #9a9a9a;border-top:0;border-radius:0 0 3px 3px"></div><div class="a" style="left:162px;top:812px;width:198px;height:22px;background:linear-gradient(#ebebeb 0,#e8e8e8 45%,#dcdcdc 50%,#d8d8d8 100%);border:1px solid #9a9a9a;border-top:0;border-radius:0 0 3px 3px"></div><div class="a" style="left:359px;top:812px;width:174px;height:22px;background:linear-gradient(#ebebeb 0,#e8e8e8 45%,#dcdcdc 50%,#d8d8d8 100%);border:1px solid #9a9a9a;border-top:0;border-radius:0 0 3px 3px"></div><div class="a" style="left:6px;top:812px;width:157px;height:22px;background:linear-gradient(#ffffff 0,#fbfbfb 45%,#f0f0f0 50%,#e6e6e6 100%);border:1px solid #9a9a9a;border-top:0;border-radius:0 0 3px 3px"></div><div class="t" style="left:13px;top:815px;color:#000;font-weight:bold;">Zu übertragende Dateien</div><div class="t" style="left:170px;top:815px;color:#000;letter-spacing:-0.086px;">Fehlgeschlagene Übertragungen</div><div class="t" style="left:367px;top:815px;color:#000;">Erfolgreiche Übertragungen</div><div class="a" style="left:0px;top:838px;width:1600px;height:22px;background:#f0eded;border-top:1px solid #fff;border-left:1px solid #fff"></div><div class="a" style="left:1562px;top:839px;width:1px;height:20px;background:#c6c6c6"></div><div class="a" style="left:1356px;top:841px;width:14px;height:17px;background:#fdfdfd;border:1px solid #9a9a9a"></div><svg class="a" style="left:1357px;top:842px;" width="12" height="15" viewBox="0 0 12 15"><path d="M2 13 L5.5 2 h1.5 L7 13 h-1.5 l0 -3 h-2 l-1 3 z" fill="#1a1a1a"/><path d="M9.5 2 v2 M9.5 6 v2 M9.5 10 v2" stroke="#888" stroke-width=".8"/></svg><div class="a" style="left:1374px;top:845px;width:16px;height:8px;background:#111"></div><svg class="a" style="left:1375px;top:846px;" width="14" height="6" viewBox="0 0 14 6"><text x="7" y="5.8" font-family="Liberation Sans" font-weight="bold" font-size="6.5" text-anchor="middle" fill="#fff">500</text></svg><div class="t" style="left:1398px;top:843px;color:#000;letter-spacing:-0.167px;">Warteschlange: leer</div><svg class="a" style="left:1570px;top:843px;" width="12" height="12" viewBox="0 0 12 12"><defs><radialGradient id="gg" cx=".4" cy=".35" r=".6"><stop offset="0" stop-color="#6aa86a"/><stop offset=".5" stop-color="#0f5a0f"/><stop offset="1" stop-color="#062a06"/></radialGradient></defs><circle cx="6" cy="6" r="4.6" fill="url(#gg)"/></svg><svg class="a" style="left:1584px;top:843px;" width="12" height="12" viewBox="0 0 12 12"><defs><radialGradient id="gr" cx=".4" cy=".35" r=".6"><stop offset="0" stop-color="#b86a6a"/><stop offset=".5" stop-color="#6a0c0c"/><stop offset="1" stop-color="#2a0404"/></radialGradient></defs><circle cx="6" cy="6" r="4.6" fill="url(#gr)"/></svg></body></html>
